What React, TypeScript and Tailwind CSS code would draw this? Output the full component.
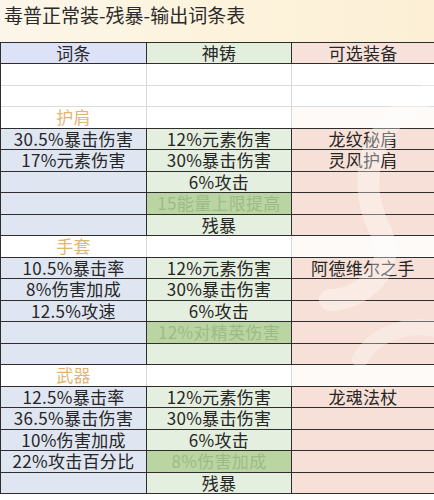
type Row =
  | { kind: "blank" }
  | { kind: "section"; label: string }
  | { kind: "data"; a?: string; b?: string; c?: string; hl?: boolean };

const rows: Row[] = [
  { kind: "blank" },
  { kind: "blank" },
  { kind: "section", label: "护肩" },
  { kind: "data", a: "30.5%暴击伤害", b: "12%元素伤害", c: "龙纹秘肩" },
  { kind: "data", a: "17%元素伤害", b: "30%暴击伤害", c: "灵风护肩" },
  { kind: "data", b: "6%攻击" },
  { kind: "data", b: "15能量上限提高", hl: true },
  { kind: "data", b: "残暴" },
  { kind: "section", label: "手套" },
  { kind: "data", a: "10.5%暴击率", b: "12%元素伤害", c: "阿德维尔之手" },
  { kind: "data", a: "8%伤害加成", b: "30%暴击伤害" },
  { kind: "data", a: "12.5%攻速", b: "6%攻击" },
  { kind: "data", b: "12%对精英伤害", hl: true },
  { kind: "data" },
  { kind: "section", label: "武器" },
  { kind: "data", a: "12.5%暴击率", b: "12%元素伤害", c: "龙魂法杖" },
  { kind: "data", a: "36.5%暴击伤害", b: "30%暴击伤害" },
  { kind: "data", a: "10%伤害加成", b: "6%攻击" },
  { kind: "data", a: "22%攻击百分比", b: "8%伤害加成", hl: true },
  { kind: "data", b: "残暴" },
];

const cell = "flex items-center justify-center whitespace-nowrap";

function TableRow({ row }: { row: Row }) {
  if (row.kind === "blank") {
    return (
      <div className="grid grid-cols-[146px_145px_1fr] h-[21.5px] border-b border-[#dcdcdc] bg-white">
        <div className="border-r border-[#d8d8d8]" />
        <div className="border-r border-[#d8d8d8]" />
        <div />
      </div>
    );
  }
  if (row.kind === "section") {
    return (
      <div className="grid grid-cols-[146px_145px_1fr] h-[21.5px] border-b border-[#2e2e2e] bg-white">
        <div className={`${cell} border-r border-[#d8d8d8] text-[#e2b576]`}>{row.label}</div>
        <div className="border-r border-[#d8d8d8]" />
        <div className="bg-[#fdfaf8]" />
      </div>
    );
  }
  return (
    <div className="grid grid-cols-[146px_145px_1fr] h-[21.5px] border-b border-[#2e2e2e]">
      <div className={`${cell} bg-[#dfe5f1] border-r border-[#2e2e2e]`}>{row.a}</div>
      <div
        className={`${cell} border-r border-[#2e2e2e] ${
          row.hl ? "bg-[#bad5a2] text-[#9dbb86]" : "bg-[#e5efdf]"
        }`}
      >
        {row.b}
      </div>
      <div className={`${cell} bg-[#f7e0d7]`}>{row.c}</div>
    </div>
  );
}

export default function App() {
  return (
    <div
      className="relative w-[434px] h-[500px] overflow-hidden bg-white text-[#262626]"
      style={{ fontFamily: '"Noto Sans CJK SC", "Noto Sans", sans-serif' }}
    >
      <div className="h-[42px] bg-gradient-to-r from-[#fcf6ea] via-[#fdf3dc] to-[#fcefd6]">
        <div className="pl-[4px] pt-[2px] text-[19px] leading-[26px] text-[#2a2a2a]">
          毒普正常装-残暴-输出词条表
        </div>
      </div>
      <div className="border-l border-[#2e2e2e] text-[17px] leading-[20px] tracking-[0.3px]">
        <div className="grid grid-cols-[146px_145px_1fr] h-[22px] border-t border-b border-[#2e2e2e]">
          <div className={`${cell} bg-[#dde2f6] border-r border-[#2e2e2e]`}>词条</div>
          <div className={`${cell} bg-[#e3eedd] border-r border-[#2e2e2e]`}>神铸</div>
          <div className={`${cell} bg-[#f6e2db]`}>可选装备</div>
        </div>
        {rows.map((r, i) => (
          <TableRow key={i} row={r} />
        ))}
      </div>
      {/* faint watermark swirl over the right column */}
      <svg
        className="pointer-events-none absolute left-0 top-0"
        width="434"
        height="500"
        viewBox="0 0 434 500"
      >
        <path
          d="M440 90 C380 110 350 170 380 230 C400 270 360 300 330 300"
          fill="none"
          stroke="#ffffff"
          strokeWidth="22"
          strokeLinecap="round"
          opacity="0.35"
        />
        <path
          d="M440 330 C400 320 370 340 360 360"
          fill="none"
          stroke="#ffffff"
          strokeWidth="16"
          strokeLinecap="round"
          opacity="0.3"
        />
      </svg>
    </div>
  );
}
